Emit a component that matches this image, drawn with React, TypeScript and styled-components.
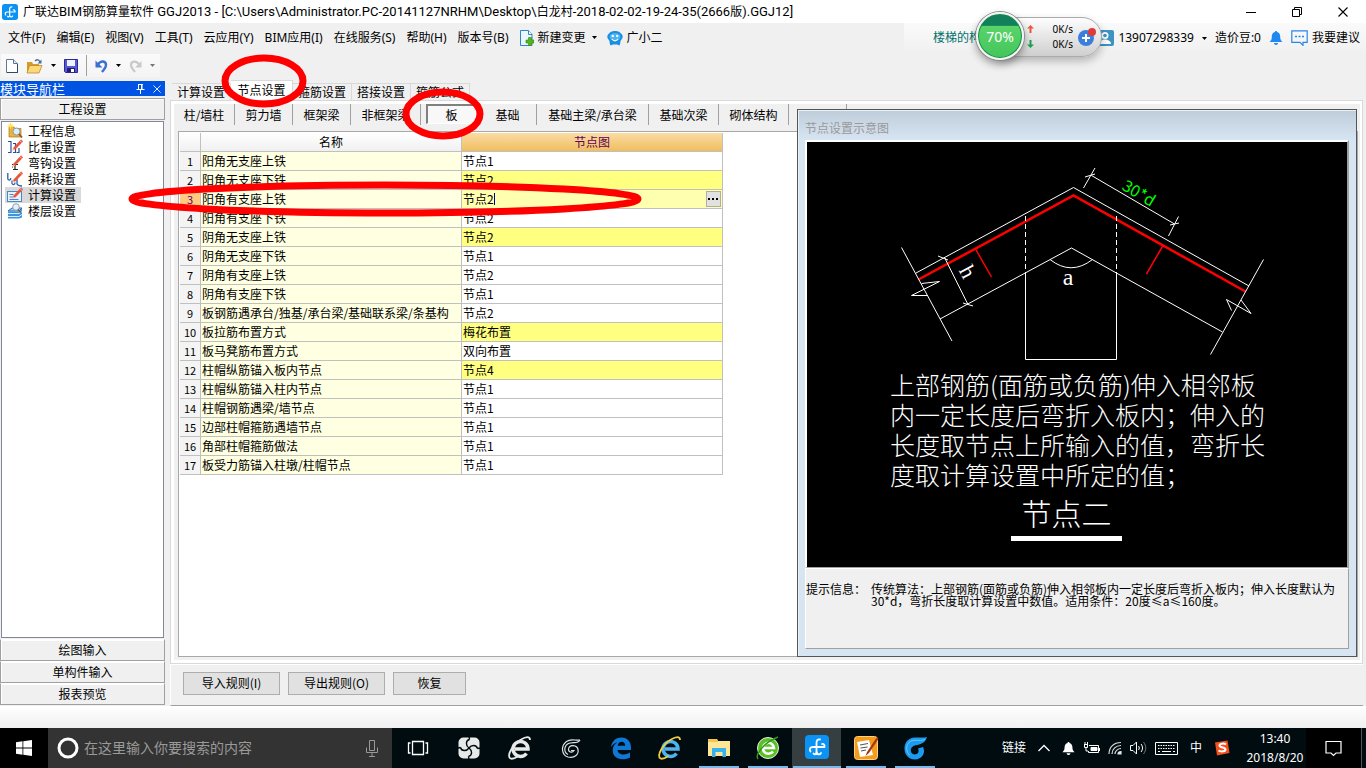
import React from "react";
import styled, { createGlobalStyle, css } from "styled-components";

const UI = `"Noto Sans", "Noto Sans CJK SC", sans-serif`;
const SONG = `"Noto Sans CJK SC", sans-serif`;

const Global = createGlobalStyle`
  * { box-sizing: border-box; }
  body { margin: 0; background: #f0f0f0; color: #000; font: 12px/16px ${UI}; }
  button, input { font: inherit; color: inherit; margin: 0; padding: 0; border: 0; background: none; border-radius: 0; }
  button { white-space: nowrap; }
  svg { display: block; flex: none; }
`;

const Screen = styled.div`
  position: relative;
  display: flex;
  flex-direction: column;
  min-height: 100vh;
  overflow: hidden;
`;

/* ---------- title, menu, tool bar ---------- */

const TitleBar = styled.header`
  display: flex;
  align-items: center;
  height: 23px;
  padding-left: 2px;
  gap: 5px;
  background: #fff;
`;
const Title = styled.h1`
  flex: 1;
  margin: 0;
  font-size: 12px;
  font-weight: 400;
  white-space: nowrap;
`;
const Latin = styled.span`
  font-family: Roboto, sans-serif;
  font-size: 13px;
`;
const WindowButtons = styled.div`
  display: flex;
  button {
    display: grid;
    place-items: center;
    width: 46px;
    height: 20px;
  }
`;

const MenuBar = styled.nav`
  display: flex;
  align-items: center;
  height: 28px;
  padding-left: 3px;
  gap: 1px;
`;
const MenuItem = styled.button`
  display: flex;
  align-items: center;
  gap: 4px;
  padding: 2px 5px 0;
`;
const AccountBar = styled.div`
  display: flex;
  align-items: center;
  gap: 4px;
  flex: none;
  width: 462px;
  height: 28px;
  margin-left: auto;
  padding: 2px 6px 0 29px;
  justify-content: space-between;
  background: linear-gradient(#fafafa, #f1f1f1);
`;
const AccountGroup = styled.div`
  display: flex;
  align-items: center;
  gap: 8px;
  button {
    display: flex;
    align-items: center;
    gap: 4px;
  }
`;
const HelpLink = styled.a`
  color: #00706b;
  text-decoration: none;
`;

const ToolBar = styled.div`
  display: flex;
  height: 29px;
  padding: 3px 0 3px 1px;
`;
const Tools = styled.div`
  display: flex;
  align-items: center;
  height: 23px;
  padding: 0 5px;
  gap: 8px;
  background: linear-gradient(#fafafa, #f4f4f4);
`;
const ToolSeparator = styled.span`
  width: 1px;
  height: 21px;
  background: #a0a0a0;
`;

/* ---------- desktop network widget ---------- */

const NetWidget = styled.aside`
  position: absolute;
  top: 17px;
  right: 264px;
  display: flex;
  align-items: center;
  width: 102px;
  height: 40px;
  padding: 0 4px 0 26px;
  border: 1px solid #aaa;
  border-radius: 0 20px 20px 0;
  background: linear-gradient(#fdfdfd, #cfcfcf);
  box-shadow: 0 4px 8px rgba(0, 0, 0, 0.25);
  font-size: 10px;
  line-height: 15px;
`;
const Ball = styled.div`
  position: absolute;
  left: -25px;
  top: -6px;
  display: grid;
  place-items: center;
  width: 48px;
  height: 48px;
  border: 2px solid #f4f4f4;
  border-radius: 50%;
  background: linear-gradient(#12805a 0 26%, #58d468 27%, #44c55c);
  box-shadow: 0 0 0 1px #8a8a8a, 0 4px 8px rgba(0, 0, 0, 0.4), inset 0 0 0 1px #118a50;
  color: #fff;
  font-size: 14px;
`;
const Rates = styled.div`
  margin: 0 4px 0 auto;
  text-align: right;
`;

/* ---------- navigation panel ---------- */

const Main = styled.main`
  display: flex;
  flex: 1;
  gap: 5px;
  font-family: ${SONG};
`;
const SidePanel = styled.aside`
  display: flex;
  flex-direction: column;
  flex: none;
  width: 165px;
  padding: 1px 0;
`;
const SideTitle = styled.h2`
  display: flex;
  align-items: center;
  height: 15px;
  margin: 0 0 2px;
  padding-right: 4px;
  gap: 8px;
  background: #0054e3;
  color: #fff;
  font-size: 13px;
  font-weight: 400;
  line-height: 15px;
  span { flex: 1; }
`;
const SideButton = styled.button`
  flex: none;
  height: 22px;
  border: 1px solid #a0a0a0;
  border-top-color: #fff;
  box-shadow: inset 1px 1px 0 #fff;
  background: #f0f0f0;
`;
const SideGroupHead = styled(SideButton)`
  border-top-color: #a0a0a0;
  margin-bottom: 1px;
`;
const SideList = styled.ul`
  flex: 1;
  margin: 0 1px 1px;
  padding: 1px 3px;
  border: 1px solid #82879a;
  background: #fff;
  list-style: none;
`;
const SideItem = styled.button<{ $on?: boolean }>`
  display: flex;
  align-items: center;
  gap: 5px;
  height: 16px;
  padding: 0 5px 0 2px;
  background: ${(p) => (p.$on ? "#d9d9d9" : "transparent")};
`;

/* ---------- work area ---------- */

const Work = styled.section`
  display: flex;
  flex: 1;
  flex-direction: column;
  min-width: 0;
  margin-right: 3px;
`;
const TabStrip = styled.div`
  display: flex;
  align-items: flex-end;
  height: 20px;
  padding-left: 2px;
`;
const Tab = styled.button<{ $on?: boolean }>`
  width: 59px;
  height: 17px;
  border: 1px solid #d9d9d9;
  border-bottom: 0;
  border-left: 0;
  ${(p) =>
    p.$on &&
    css`
      width: 62px;
      height: 20px;
      background: #fff;
      padding-bottom: 1px;
    `}
`;
const Panel = styled.div`
  position: relative;
  display: flex;
  flex: 1;
  flex-direction: column;
  padding: 3px 2px 3px 3px;
  border: 1px solid #d9d9d9;
  background: #fff;
`;
const PanelBody = styled.div`
  display: flex;
  flex: 1;
  flex-direction: column;
  background: #f0f0f0;
`;
const SubTabs = styled.div`
  display: flex;
  height: 27px;
`;
const SubTab = styled.button<{ $w: number }>`
  flex: none;
  width: ${(p) => p.$w}px;
  height: 21px;
  border-right: 1px solid #a0a0a0;
`;
const PressedTab = styled.button`
  width: 50px;
  height: 20px;
  margin: 0 3px 0 5px;
  border: 1px solid #fff;
  border-top: 2px solid #808080;
  border-left: 2px solid #808080;
  background: #f8f8f8;
`;
const GridBox = styled.div`
  flex: 1;
  margin: 0 2px 3px 4px;
  padding: 1px;
  border: 1px solid #a8a8a8;
  background: #fff;
`;
const Table = styled.table`
  table-layout: fixed;
  width: 543px;
  border-spacing: 0;
  font-size: 12px;
  line-height: 16px;
`;
const Th = styled.th<{ $w: number; $on?: boolean }>`
  width: ${(p) => p.$w}px;
  height: 19px;
  padding: 0;
  border: solid #c0c0c0;
  border-width: 0 1px 1px 0;
  background: ${(p) => (p.$on ? "linear-gradient(#fadca4, #f0be60)" : "linear-gradient(#fff, #f0f0f0)")};
  color: ${(p) => (p.$on ? "#600060" : "#000")};
  font-weight: 400;
`;
const cell = css`
  height: 19px;
  padding: 0;
  border: solid #c0c0c0;
  border-width: 0 1px 1px 0;
  font-weight: 400;
`;
const RowNo = styled.th<{ $on?: boolean }>`
  ${cell}
  background: ${(p) => (p.$on ? "#ffcb83" : "#f4f4f4")};
  color: ${(p) => (p.$on ? "#600060" : "#000")};
  font-size: 11px;
`;
const NameCell = styled.td`
  ${cell}
  padding-left: 1px;
  background: #ffffe1;
  white-space: nowrap;
  overflow: hidden;
`;
const NodeCell = styled.td<{ $state: string }>`
  ${cell}
  padding-left: 1px;
  background: ${(p) => (p.$state === "edit" ? "#ffffb0" : p.$state === "changed" ? "#ffff80" : "#fff")};
`;
const Editor = styled.div`
  display: flex;
  align-items: center;
  height: 18px;
  padding-right: 1px;
  input { width: 31px; height: 16px; }
`;
const Caret = styled.span`
  flex: 1;
  height: 12px;
  border-left: 1px solid #000080;
`;
const More = styled.button`
  display: grid;
  place-items: center;
  width: 15px;
  height: 16px;
  border: 1px solid #adadad;
  background: #e1e1e1;
`;
const Footer = styled.div`
  display: flex;
  gap: 8px;
  height: 42px;
  padding: 7px 12px;
  border: solid #fff;
  border-width: 1px 0 0 1px;
  border-bottom: 1px solid #a0a0a0;
`;
const PushButton = styled.button<{ $w: number }>`
  width: ${(p) => p.$w}px;
  height: 23px;
  padding-bottom: 1px;
  border: 1px solid #adadad;
  background: #e1e1e1;
`;
const StatusStrip = styled.div`
  height: 22px;
  background: linear-gradient(#fff, #f0f0f0);
`;

/* ---------- node preview window ---------- */

const Preview = styled.section`
  position: absolute;
  top: 8px;
  right: 5px;
  bottom: 6px;
  display: flex;
  flex-direction: column;
  width: 560px;
  padding: 0 7px 7px 7px;
  border: 1px solid #555;
  box-shadow: inset 1px 1px 0 #e8f0f8;
  background: linear-gradient(#bfcddb, #d7e4f2 30px);
`;
const PreviewTitle = styled.h2`
  height: 30px;
  margin: 0;
  padding: 9px 0 0;
  color: #999;
  font-size: 12px;
  font-weight: 400;
  line-height: 18px;
`;
const Figure = styled.figure`
  flex: 1;
  margin: 0;
  border: solid #fff;
  border-width: 2px 0 0 2px;
  border-right: 2px solid #a0a0a0;
  border-bottom: 1px solid #a0a0a0;
  background: #000;
  color: #fff;
`;
const Note = styled.figcaption`
  padding-left: 83px;
  font-size: 25px;
  font-weight: 300;
  line-height: 30px;
  white-space: nowrap;
`;
const NodeName = styled.p`
  width: 111px;
  margin: 6px 0 0 121px;
  padding-bottom: 7px;
  border-bottom: 5px solid #fff;
  font-size: 30px;
  line-height: 34px;
  text-align: center;
`;
const Hint = styled.dl`
  display: flex;
  height: 81px;
  margin: 0;
  padding: 14px 0;
  border: 1px solid #fff;
  border-right: 1px solid #a0a0a0;
  border-bottom: 1px solid #a0a0a0;
  background: #f0f0f0;
  line-height: 12px;
  white-space: nowrap;
  dt { width: 65px; }
  dd { margin: 0; }
`;

/* ---------- task bar ---------- */

const TaskBar = styled.footer`
  display: flex;
  height: 40px;
  background: #000c10;
  color: #fff;
`;
const Start = styled.button`
  display: grid;
  place-items: center;
  width: 48px;
  background: #000;
`;
const Search = styled.label`
  display: flex;
  align-items: center;
  flex: none;
  width: 344px;
  padding: 0 14px 0 8px;
  gap: 4px;
  background: #333;
  input { flex: 1; font-size: 14px; }
  input::placeholder { color: #9a9a9a; }
`;
const Apps = styled.div<{ $w: number }>`
  display: flex;
  button {
    width: ${(p) => p.$w}px;
  }
`;
const AppButton = styled.button<{ $open?: boolean; $on?: boolean }>`
  display: flex;
  flex-direction: column;
  align-items: center;
  justify-content: space-between;
  padding-top: 7px;
  background: ${(p) => (p.$on ? "#353e41" : "transparent")};
  &::after {
    content: "";
    width: ${(p) => (p.$on ? 48 : 40)}px;
    height: 2px;
    background: ${(p) => (p.$open ? "#76b9ed" : "transparent")};
  }
`;
const Tray = styled.div`
  display: flex;
  align-items: center;
  margin-left: auto;
`;
const TrayIcons = styled.div`
  display: flex;
  align-items: center;
  gap: 8px;
  padding-right: 14px;
`;
const TrayText = styled.span`
  margin: 0 4px;
`;
const Overflow = styled.button`
  margin-right: 4px;
`;
const Clock = styled.time`
  width: 62px;
  font-size: 12px;
  line-height: 19px;
  text-align: center;
`;
const NoticeButton = styled.button`
  display: grid;
  place-items: center;
  width: 56px;
  height: 40px;
  margin-right: 4px;
  border-right: 1px solid #555;
  background: #000;
`;

const Marks = styled.svg`
  position: absolute;
  top: 0;
  left: 0;
  pointer-events: none;
`;

/* ---------- icons ---------- */

const Arrow = ({ color = "#000" }: { color?: string }) => (
  <svg width="5" height="3" viewBox="0 0 5 3"><path d="M0 0h5L2.500 3z" fill={color} /></svg>
);

const Brand = ({ size }: { size: number }) => (
  <svg width={size} height={size} viewBox="0 0 24 24">
    <rect width="24" height="24" rx="4" fill="#0a93f5" />
    <path d="M15 4.500C12.500 4 11.500 5.500 11.500 8V16.500C11.500 19.500 9.500 20 8.500 18.500M19.500 12H8C5 12 4 14 5.500 16.500M11.500 16.500C12 19.500 14.500 20.500 16 18M19.500 12C20 10 18.500 8.500 17 9" fill="none" stroke="#fff" strokeWidth="1.800" strokeLinecap="round" />
  </svg>
);

const NewFile = () => (
  <svg width="12" height="16" viewBox="0 0 12 16">
    <path d="M.5 1.500h7l4 4v9H.5z" fill="#fff" stroke="#5b7896" />
    <path d="M7.500 1.500v4h4" fill="#dce8f5" stroke="#5b7896" />
    <path d="M1 14.500h10.500V6" fill="none" stroke="#2f4a68" />
  </svg>
);
const OpenFolder = () => (
  <svg width="17" height="16" viewBox="0 0 17 16">
    <path d="M1 4h5l1 2h6v9H1z" fill="#d79b2c" />
    <path d="M3.500 7.500H16L13 15H1z" fill="#fbd878" stroke="#b8801c" strokeWidth=".7" />
    <path d="M9 3c2-2 4-1.500 5 1" fill="none" stroke="#4a6f9c" strokeWidth="1.300" />
    <path d="M15.500 1.500v4h-4z" fill="#4a6f9c" />
  </svg>
);
const Save = () => (
  <svg width="14" height="14" viewBox="0 0 14 14">
    <path d="M.5.500h13v13h-12l-1-1z" fill="#5558d6" stroke="#2b2a94" />
    <path d="M3 1h8v6H3z" fill="#eef1ff" />
    <path d="M3 9h8v4H3z" fill="#1f1e66" />
    <path d="M7 10h3v3H7z" fill="#fff" />
  </svg>
);
const Undo = ({ color }: { color: string }) => (
  <svg width="13" height="14" viewBox="0 0 13 14">
    <path d="M3 5.500C6 1 11 2 11 6c0 3-2 4.500-4 7" fill="none" stroke={color} strokeWidth="2.400" />
    <path d="M.5 1.500v7H7.500z" fill={color} />
  </svg>
);
const Redo = () => (
  <svg width="13" height="14" viewBox="0 0 13 14">
    <path d="M10 5.500C7 1 2 2 2 6c0 3 2 4.500 4 7" fill="none" stroke="#c9c9c9" strokeWidth="2.200" />
    <path d="M12.500 2v6.500H6z" fill="#c9c9c9" />
  </svg>
);
const NewChange = () => (
  <svg width="14" height="16" viewBox="0 0 14 16">
    <path d="M.5.500h8l3.500 4v11H.5z" fill="#eaf5fd" stroke="#2a86c8" />
    <path d="M8.500.500v4H12" fill="#fff" stroke="#2a86c8" />
    <path d="M8.500 7.500h3v2.500H14v3h-2.500v2.500h-3V13H6v-3h2.500z" fill="#57b51c" stroke="#2f8a10" strokeWidth=".6" />
  </svg>
);
const Robot = () => (
  <svg width="16" height="16" viewBox="0 0 16 16">
    <path d="M3 2.500C5 .5 11 .5 13 2.500l2 2c1 1.500 1 3.500-.5 5L13.500 11c0 2-.5 3-1 4.500L10 14.500H6l-2.500 1C3 14 2.500 13 2.500 11L1.500 9.500C0 8 0 6 1 4.500z" fill="#1b8fdf" />
    <ellipse cx="8" cy="7" rx="5.500" ry="4" fill="#49b4f2" />
    <circle cx="5.800" cy="6" r="1.200" fill="#fff" /><circle cx="10.200" cy="6" r="1.200" fill="#fff" />
    <path d="M5 9c2 2.500 4 2.500 6 0" fill="none" stroke="#fff" strokeWidth="1.200" />
  </svg>
);
const User = () => (
  <svg width="16" height="16" viewBox="0 0 16 16">
    <rect width="16" height="16" rx="2" fill="#3f93c4" />
    <circle cx="7" cy="5.500" r="3.500" fill="#fff" /><path d="M1 14c0-6 12-6 12 0z" fill="#fff" />
    <circle cx="7" cy="5.500" r="1.800" fill="#3f93c4" />
  </svg>
);
const Bell = ({ color, size }: { color: string; size: number }) => (
  <svg width={size} height={size} viewBox="0 0 14 14">
    <path d="M7 0c.8 0 1 .4 1 1 2 .5 3.200 2.200 3.200 4.500 0 3 .6 4 2.300 5.500H.5c1.700-1.500 2.300-2.500 2.300-5.500C2.800 3.200 4 1.500 6 1c0-.6.2-1 1-1z" fill={color} />
    <path d="M5 12h4c0 2.500-4 2.500-4 0z" fill={color} />
  </svg>
);
const Chat = () => (
  <svg width="17" height="16" viewBox="0 0 17 16" fill="none">
    <path d="M.8.800h15.400v11.500H12v3L9 12.300H.8z" stroke="#2787e8" strokeWidth="1.200" />
    <path d="M4 6.500h2M7.500 6.500h2M11 6.500h2" stroke="#2787e8" strokeWidth="1.600" />
  </svg>
);
const Pin = () => (
  <svg width="9" height="10" viewBox="0 0 9 10" fill="none" stroke="#fff">
    <path d="M2.500 1v4.500M2 .5h5M6 1v4.500M5.500 1v4.500M.5 5.500h8M4.500 6v4" />
  </svg>
);
const Cross = ({ size, color }: { size: number; color: string }) => (
  <svg width={size} height={size} viewBox="0 0 10 10"><path d="M.5.500l9 9M9.500.500l-9 9" stroke={color} strokeWidth="1.100" /></svg>
);

const Pencil = () => (
  <g>
    <path d="M6 9.500L14 .8l1.800 1.600L8 10.500z" fill="#e8533c" stroke="#e8533c" strokeWidth=".6" />
    <path d="M6 9.500l2 1L5.300 12z" fill="#f3c38c" />
    <path d="M13 2l2 1.500" stroke="#f7a79a" />
  </g>
);
const sideIcons: Record<string, React.ReactNode> = {
  info: (
    <>
      <path d="M2 4h5l1 1.500h6V14H2z" fill="#e9b33c" stroke="#b07a16" strokeWidth=".7" />
      <path d="M3.500 0v6M.5 3h6M1.300 1l4.400 4M5.700 1L1.300 5" stroke="#ffe14a" />
      <circle cx="9.500" cy="8.500" r="3.500" fill="#dceefb" stroke="#8b98a5" />
      <path d="M12 11l3 3.500" stroke="#8a5a2a" strokeWidth="1.800" />
    </>
  ),
  weight: (
    <>
      <path d="M1 2.500h3v11H1M6 4.500h2.500v9H6M9.500 13.500H12V9" fill="none" stroke="#2a4f9c" strokeWidth="1.200" />
      <Pencil />
    </>
  ),
  hook: (
    <>
      <path d="M5 9.500h6M8 9.500v5M6 14.500h5M5 12h1" fill="none" stroke="#222" strokeWidth="1.200" />
      <Pencil />
    </>
  ),
  loss: (
    <>
      <path d="M.8 2v6c1 2 3 1 3-1M5 9.500v3c1 2 3 1 3-1M10 8v5c1 2 3 2 5 2" fill="none" stroke="#2a5fb0" strokeWidth="1.300" />
      <Pencil />
    </>
  ),
  calc: (
    <>
      <rect x=".5" y="4.500" width="14" height="10" fill="#e8f2fd" stroke="#4a86cc" />
      <path d="M2.500 7.500h4M2.500 10h4M2.500 12.500h9" stroke="#4a86cc" />
      <Pencil />
    </>
  ),
  floor: (
    <>
      <path d="M1 8l4-3h10l-3 3z" fill="#9fd0f5" stroke="#1c6cb8" />
      <path d="M1 8.500h11l3-3v9l-3 1H1z" fill="#3f94dc" />
      <path d="M1 10.500h11M1 13.500h11M12 10.500l3-2M12 13.500l3-2" stroke="#d8edff" />
      <circle cx="9" cy="4" r="3.300" fill="#e4f0fa" stroke="#93a0ab" />
      <path d="M11 6.500l3 3" stroke="#7a5a3a" strokeWidth="1.500" />
    </>
  ),
};

const Ie = ({ main, ring }: { main: string; ring: string }) => (
  <svg width="26" height="26" viewBox="0 0 26 26" fill="none">
    <path d="M19.500 18.500a7.500 7.500 0 1 1 1.500-4.500H8" stroke={main} strokeWidth="3.500" />
    <path d="M3.500 23.500C-1 21 6 9 14 4.500c5-3 9-3.500 9 .5M3.500 23.500c2 .8 5-.5 8-2.500" stroke={ring} strokeWidth="1.800" />
  </svg>
);

/* ---------- data ---------- */

const menus = ["文件(F)", "编辑(E)", "视图(V)", "工具(T)", "云应用(Y)", "BIM应用(I)", "在线服务(S)", "帮助(H)", "版本号(B)"];
const sideItems: [string, string][] = [
  ["info", "工程信息"], ["weight", "比重设置"], ["hook", "弯钩设置"],
  ["loss", "损耗设置"], ["calc", "计算设置"], ["floor", "楼层设置"],
];
const tabs = ["计算设置", "节点设置", "箍筋设置", "搭接设置", "箍筋公式"];
const subTabs: [string, number][] = [
  ["柱/墙柱", 61], ["剪力墙", 58], ["框架梁", 58], ["非框架梁", 70], ["板", 0],
  ["基础", 58], ["基础主梁/承台梁", 112], ["基础次梁", 70], ["砌体结构", 70], ["其它", 58],
];
const rows: [string, string, string?][] = [
  ["阳角无支座上铁", "节点1"],
  ["阳角无支座下铁", "节点2", "changed"],
  ["阳角有支座上铁", "节点2", "edit"],
  ["阳角有支座下铁", "节点2"],
  ["阴角无支座上铁", "节点2", "changed"],
  ["阴角无支座下铁", "节点1"],
  ["阴角有支座上铁", "节点2"],
  ["阴角有支座下铁", "节点1"],
  ["板钢筋遇承台/独基/承台梁/基础联系梁/条基构", "节点2"],
  ["板拉筋布置方式", "梅花布置", "changed"],
  ["板马凳筋布置方式", "双向布置"],
  ["柱帽纵筋锚入板内节点", "节点4", "changed"],
  ["柱帽纵筋锚入柱内节点", "节点1"],
  ["柱帽钢筋遇梁/墙节点", "节点1"],
  ["边部柱帽箍筋遇墙节点", "节点1"],
  ["角部柱帽箍筋做法", "节点1"],
  ["板受力筋锚入柱墩/柱帽节点", "节点1"],
];

const Diagram = () => (
  <svg width="540" height="227" viewBox="807 142 540 227" fill="none" stroke="#fff" strokeWidth="1">
    <path d="M916 273L1073.500 187.500L1249 286M940 319L1071.500 248L1222.500 332" />
    <path d="M918.500 279.500L1073.500 195.500L1245.500 291.500" stroke="#f00" strokeWidth="2.500" />
    <path d="M975.500 249L991.500 277M1163 245.500L1146.500 274" stroke="#f00" strokeWidth="1.500" />
    <path d="M901.500 247.500L952 341M1263.500 259.500L1210.500 354.500" />
    <path d="M1025.500 273V359.500H1116.500V273" />
    <path d="M1025.500 216V273M1116.500 216V273" strokeDasharray="5 3" />
    <path d="M1050 259.500Q1071 276 1092.500 259.500" />
    <path d="M1091.500 175.500L1174.500 224M1095 168L1083.500 188M1178.500 216.500L1168.500 236M1085 177L1095 174M1170 225L1179 223" />
    <path d="M944.500 257.500L968 304.500M938 256L948 260M963 303L973 306" />
    <path d="M927.500 295.500H911.500L939.500 281.500L921.500 283.500M1231.500 310.500L1226.500 299.500L1251 313.500L1241 300" />
    <g stroke="none" fill="#fff" fontFamily='"Liberation Serif", serif' fontSize="24" textAnchor="middle">
      <text x="1068" y="285">a</text>
      <text fontSize="22" transform="translate(961 275) rotate(62)">h</text>
      <text fill="#0f0" fontFamily='"Noto Sans CJK SC", sans-serif' fontSize="16" transform="translate(1136 198) rotate(31)">30*d</text>
    </g>
  </svg>
);

export default function App() {
  return (
    <Screen>
      <Global />
      <TitleBar>
        <Brand size={16} />
        <Title>
          广联达<Latin>BIM</Latin>钢筋算量软件
          <Latin> GGJ2013 - [C:\Users\Administrator.PC-20141127NRHM\Desktop\</Latin>白龙村
          <Latin>-2018-02-02-19-24-35(2666</Latin>版<Latin>).GGJ12]</Latin>
        </Title>
        <WindowButtons>
          <button aria-label="最小化"><svg width="10" height="10"><path d="M0 5.500h10" stroke="#000" /></svg></button>
          <button aria-label="还原">
            <svg width="10" height="10" fill="none" stroke="#000"><path d="M.5 2.500h7v7h-7zM2.500 2.500v-2h7v7h-2" /></svg>
          </button>
          <button aria-label="关闭"><Cross size={10} color="#000" /></button>
        </WindowButtons>
      </TitleBar>

      <MenuBar>
        {menus.map((m) => <MenuItem key={m}>{m}</MenuItem>)}
        <MenuItem><NewChange />新建变更</MenuItem>
        <Arrow />
        <MenuItem><span /><Robot />广小二</MenuItem>
        <AccountBar>
          <HelpLink href="#help">楼梯的构</HelpLink>
          <AccountGroup>
            <button><User />13907298339</button>
            <Arrow />
            <button>造价豆:0</button>
            <button aria-label="消息"><Bell color="#1e88f0" size={14} /></button>
            <button><Chat />我要建议</button>
          </AccountGroup>
        </AccountBar>
      </MenuBar>

      <ToolBar>
        <Tools>
          <button aria-label="新建"><NewFile /></button>
          <button aria-label="打开"><OpenFolder /></button>
          <Arrow />
          <button aria-label="保存"><Save /></button>
          <ToolSeparator />
          <button aria-label="撤销"><Undo color="#3b6fd0" /></button>
          <Arrow />
          <button aria-label="重做"><Redo /></button>
          <Arrow color="#777" />
        </Tools>
      </ToolBar>

      <Main>
        <SidePanel>
          <SideTitle>
            <span>模块导航栏</span>
            <button aria-label="固定"><Pin /></button>
            <button aria-label="关闭面板"><Cross size={8} color="#fff" /></button>
          </SideTitle>
          <SideGroupHead>工程设置</SideGroupHead>
          <SideList>
            {sideItems.map(([icon, label]) => (
              <li key={icon}>
                <SideItem $on={icon === "calc"}>
                  <svg width="16" height="16" viewBox="0 0 16 16">{sideIcons[icon]}</svg>
                  {label}
                </SideItem>
              </li>
            ))}
          </SideList>
          <SideButton>绘图输入</SideButton>
          <SideButton>单构件输入</SideButton>
          <SideButton>报表预览</SideButton>
        </SidePanel>

        <Work>
          <TabStrip>
            {tabs.map((t, i) => <Tab key={t} $on={i === 1}>{t}</Tab>)}
          </TabStrip>
          <Panel>
            <PanelBody>
              <SubTabs>
                {subTabs.map(([t, w]) =>
                  t === "板" ? <PressedTab key={t}>{t}</PressedTab> : <SubTab key={t} $w={w}>{t}</SubTab>
                )}
              </SubTabs>
              <GridBox>
                <Table>
                  <thead>
                    <tr>
                      <Th $w={21} />
                      <Th $w={261}>名称</Th>
                      <Th $w={261} $on>节点图</Th>
                    </tr>
                  </thead>
                  <tbody>
                    {rows.map(([name, node, state], i) => (
                      <tr key={name}>
                        <RowNo $on={state === "edit"}>{i + 1}</RowNo>
                        <NameCell>{name}</NameCell>
                        <NodeCell $state={state ?? ""}>
                          {state === "edit" ? (
                            <Editor>
                              <input aria-label={name} defaultValue={node} />
                              <Caret />
                              <More aria-label="选择节点">
                                <svg width="11" height="2"><path d="M0 0h2v2H0zM4 0h2v2H4zM8 0h2v2H8z" /></svg>
                              </More>
                            </Editor>
                          ) : node}
                        </NodeCell>
                      </tr>
                    ))}
                  </tbody>
                </Table>
              </GridBox>
            </PanelBody>
            <Preview>
              <PreviewTitle>节点设置示意图</PreviewTitle>
              <Figure>
                <Diagram />
                <Note>
                  上部钢筋(面筋或负筋)伸入相邻板<br />
                  内一定长度后弯折入板内；伸入的<br />
                  长度取节点上所输入的值，弯折长<br />
                  度取计算设置中所定的值；
                  <NodeName>节点二</NodeName>
                </Note>
              </Figure>
              <Hint>
                <dt>提示信息：</dt>
                <dd>
                  传统算法：上部钢筋(面筋或负筋)伸入相邻板内一定长度后弯折入板内；伸入长度默认为<br />
                  30*d，弯折长度取计算设置中数值。适用条件：20度≤a≤160度。
                </dd>
              </Hint>
            </Preview>
          </Panel>
          <Footer>
            <PushButton $w={97}>导入规则(I)</PushButton>
            <PushButton $w={97}>导出规则(O)</PushButton>
            <PushButton $w={73}>恢复</PushButton>
          </Footer>
        </Work>
      </Main>
      <StatusStrip />

      <TaskBar>
        <Start aria-label="开始">
          <svg width="16" height="16" viewBox="0 0 16 16" fill="#fff">
            <path d="M0 2.200l6.500-.9v6.300H0zM7.300 1.200L16 0v7.600H7.300zM0 8.400h6.500v6.300L0 13.800zM7.300 8.400H16V16l-8.700-1.200z" />
          </svg>
        </Start>
        <Search>
          <svg width="24" height="24"><circle cx="12" cy="12" r="9" fill="none" stroke="#fff" strokeWidth="3" /></svg>
          <input aria-label="搜索" placeholder="在这里输入你要搜索的内容" />
          <svg width="12" height="17" fill="none" stroke="#999"><path d="M3.500.500h5v10h-5zM.5 7.500v5h11v-5M6 13v3M3 16.500h6" /></svg>
        </Search>
        <Apps $w={51}>
          <AppButton aria-label="任务视图">
            <svg width="26" height="26" fill="none" stroke="#fff" strokeWidth="1.300">
              <path d="M7.500 6.500h11v13h-11zM5.500 8H3.500v10h2M20.500 8h2v10h-2" />
            </svg>
          </AppButton>
          <AppButton aria-label="风扇">
            <svg width="26" height="26" viewBox="0 0 26 26">
              <rect x="2.500" y="2.500" width="21" height="21" rx="5" fill="#e8eaea" />
              {[0, 90, 180, 270].map((a) => (
                <path key={a} transform={`rotate(${a} 13 13)`} d="M13 13C9.500 10.500 9.500 5.500 13.500 4.500M13.500 4.500L13 1.500" fill="none" stroke="#000c10" strokeWidth="1.400" />
              ))}
            </svg>
          </AppButton>
          <AppButton aria-label="浏览器"><Ie main="#e8eaea" ring="#e8eaea" /></AppButton>
          <AppButton aria-label="广联达">
            <svg width="26" height="26" viewBox="0 0 26 26" fill="none" stroke="#dfe3e3" strokeWidth="1.200">
              <path d="M22 5C17 6 13 3 8.500 6.500 2.500 11 3.500 20 10 22c7 1.500 11-3 10-7.500-1-4.500-8.500-5.500-9.500-.5-.3 3 3.500 4.500 5.500 1.500h-3" />
              <path d="M22 5C20 9 16 7 12 8 6 9.500 5 17 10 19.500" />
            </svg>
          </AppButton>
        </Apps>
        <Apps $w={49}>
          <AppButton aria-label="Edge">
            <svg width="26" height="26" viewBox="0 0 26 26">
              <path d="M3 12C4 5.500 8.500 2.500 13.500 2.500c6 0 9.500 4.500 9.500 10v2.500H9.500c.3 3 3 4.500 6 4.500 2.500 0 4.500-.7 6.500-2v5c-2 1.200-4.500 1.800-7.500 1.800-6 0-9.800-3.500-9.800-9 0-3.500 1.800-6.500 5-8C6.500 8.300 4.500 9.700 3 12zm6.700-1.200h7.500c0-2.500-1.500-4-3.600-4-2 0-3.400 1.500-3.900 4z" fill="#0f78d7" />
            </svg>
          </AppButton>
          <AppButton aria-label="Internet Explorer"><Ie main="#4fb4ee" ring="#f3cc3c" /></AppButton>
          <AppButton aria-label="文件资源管理器" $open>
            <svg width="26" height="26" viewBox="0 0 26 26">
              <path d="M2 4h9l1 2h12v15H2z" fill="#ffe596" />
              <path d="M2 4h9l1 3H2z" fill="#f3c64f" />
              <path d="M6 13h14v9h-3.500v-5h-7v5H6z" fill="#35b3ea" />
            </svg>
          </AppButton>
          <AppButton aria-label="360浏览器" $open>
            <svg width="26" height="26" viewBox="0 0 26 26" fill="none">
              <circle cx="13" cy="13" r="10.500" fill="#5ac026" stroke="#e6f6da" />
              <path d="M18 16.500a5.500 5.500 0 1 1 1-3.500H8.500" stroke="#fff" strokeWidth="2.600" />
              <path d="M3 24C0 20 8 8 23 2" stroke="#2b9a16" strokeWidth="1.500" />
            </svg>
          </AppButton>
          <AppButton aria-label="广联达GGJ" $open $on><Brand size={24} /></AppButton>
          <AppButton aria-label="记事本" $open>
            <svg width="26" height="26" viewBox="0 0 26 26">
              <rect x="1.500" y="1.500" width="23" height="23" rx="3" fill="#f59c1c" stroke="#ffd27a" />
              <path d="M4 7l12-2 4 15-13 2z" fill="#fff" />
              <path d="M7 10l8-1.500M7.500 13l7-1M8 16l5-1" stroke="#555" />
              <path d="M24 2L14 17l-1.500 4 3.500-3L25.500 4z" fill="#a43a10" />
            </svg>
          </AppButton>
          <AppButton aria-label="广联达云" $open>
            <svg width="26" height="26" viewBox="0 0 26 26" fill="none">
              <path d="M25 2C19 4 11 0 5.500 5.500 0 11 2 24 12.500 24.500c8 0 11.500-7 8.500-12.500l-5 1.500c1.500 3 0 6-3.500 6-4.500-.5-5-6.500-1-8.500C16 9 23 10 25 2z" fill="#1c9af0" />
              <path d="M23 4.500C17 7 11 3 6.500 8c-3 4-2 9 1 12" stroke="#6cc6fa" />
            </svg>
          </AppButton>
        </Apps>
        <Tray>
          <TrayIcons>
            <TrayText>链接</TrayText>
            <Overflow aria-label="更多图标">
              <svg width="12" height="8" viewBox="0 0 12 8"><path d="M.5 7L6 1.500 11.500 7" fill="none" stroke="#fff" strokeWidth="1.300" /></svg>
            </Overflow>
            <Bell color="#fff" size={13} />
            <svg width="17" height="14" viewBox="0 0 17 14" fill="none" stroke="#fff">
              <path d="M6 4.500h9.500v7H5.500V10M16.500 7v3M1 3.500h4M1.500 4v2.500h3V4M2 1v2M4.500 1v2M3 7v3h2" /><path d="M8 6.500h6v3H8z" fill="#fff" />
            </svg>
            <svg width="14" height="14" viewBox="0 0 14 14" fill="none" stroke="#ddd" strokeWidth="1.200">
              <path d="M1 13C1 6 6 1.500 13 1.500M4 13c0-5 4-8.500 9-8.500M7 13c0-3 3-5.500 6-5.500" /><path d="M10 13c0-1.500 1.500-2.500 3-2.500V13z" fill="#fff" />
            </svg>
            <svg width="17" height="14" viewBox="0 0 17 14" fill="none" stroke="#fff">
              <path d="M.5 4.500H3L6.500 1v12L3 9.500H.5zM8.500 5c1 1.300 1 2.700 0 4M11 3c2 2.500 2 5.500 0 8" /><path d="M13.500 1c3 4 3 8 0 12" stroke="#777" />
            </svg>
            <svg width="23" height="13" viewBox="0 0 23 13" fill="none" stroke="#fff">
              <path d="M.5.500h22v12H.5z" /><path d="M3 3.500h17M3 6.500h17" strokeDasharray="1.500 1" /><path d="M3 9.500h2M7 9.500h9M18 9.500h2" />
            </svg>
            <TrayText>中</TrayText>
            <svg width="16" height="16" viewBox="0 0 16 16">
              <path d="M1 2.500L13.500.5l2 12.500L3 15.500z" fill="#f4501e" />
              <path d="M12 4.500c-2-1.500-6.500-1-6.500 1 0 2.500 6 1.500 6 4 0 2-4.500 2.500-7 1" fill="none" stroke="#fff" strokeWidth="2" />
            </svg>
          </TrayIcons>
          <Clock>13:40<br />2018/8/20</Clock>
          <NoticeButton aria-label="通知">
            <svg width="17" height="17" fill="none" stroke="#fff" strokeWidth="1.200"><path d="M1 1.500h15v11.500h-5L8.500 15.500 6 13H1z" /></svg>
          </NoticeButton>
        </Tray>
      </TaskBar>

      <NetWidget>
        <Ball>70%</Ball>
        <svg width="7" height="24" viewBox="0 0 7 24">
          <path d="M3.500 0L7 3.500H4.500V8h-2V3.500H0z" fill="#ea5a3c" /><path d="M3.500 23L0 19.500h2.500V15h2v4.500H7z" fill="#22a052" />
        </svg>
        <Rates>0K/s<br />0K/s</Rates>
        <svg width="20" height="24" viewBox="0 0 20 24">
          <circle cx="9" cy="13" r="8" fill="#3b7fdc" /><path d="M9 9v8M5 13h8" stroke="#fff" strokeWidth="2" />
          <circle cx="15" cy="7" r="4" fill="#e03a36" />
        </svg>
      </NetWidget>

      <Marks width="660" height="230" viewBox="0 0 660 230" fill="none" stroke="#f00" strokeWidth="7" aria-hidden="true">
        <ellipse cx="264" cy="81" rx="39" ry="23" />
        <ellipse cx="443" cy="114" rx="37" ry="22" />
        <ellipse cx="385" cy="199" rx="253" ry="14" />
      </Marks>
    </Screen>
  );
}
